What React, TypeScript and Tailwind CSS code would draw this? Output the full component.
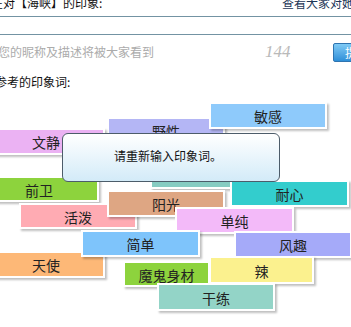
import React from "react";

type Tag = { t: string; x: number; y: number; w: number; h: number; c: string };

const tags: Tag[] = [
  { t: "野性", x: 109, y: 24, w: 114, h: 23, c: "#b4b6f5" },
  { t: "敏感", x: 211, y: 9, w: 114, h: 23, c: "#8ecafb" },
  { t: "文静", x: -11, y: 35, w: 114, h: 23, c: "#ebb2f3" },
  { t: "", x: 152, y: 69, w: 114, h: 23, c: "#86ccc2" },
  { t: "前卫", x: -19, y: 83, w: 116, h: 22, c: "#8dd33d" },
  { t: "耐心", x: 232, y: 87, w: 115, h: 23, c: "#33cdcd" },
  { t: "活泼", x: 21, y: 110, w: 114, h: 22, c: "#ffabb3" },
  { t: "阳光", x: 109, y: 97, w: 114, h: 23, c: "#dea683" },
  { t: "单纯", x: 177, y: 114, w: 115, h: 23, c: "#f3baf9" },
  { t: "天使", x: -11, y: 158, w: 114, h: 23, c: "#fdb877" },
  { t: "简单", x: 83, y: 137, w: 115, h: 23, c: "#7ec4fb" },
  { t: "风趣", x: 236, y: 138, w: 114, h: 23, c: "#a5aaf9" },
  { t: "魔鬼身材", x: 125, y: 168, w: 83, h: 22, c: "#8dd33d" },
  { t: "辣", x: 211, y: 163, w: 101, h: 24, c: "#fbf18e" },
  { t: "干练", x: 159, y: 190, w: 114, h: 24, c: "#93d4c7" },
];

export default function App() {
  return (
    <div
      className="relative w-[351px] h-[327px] overflow-hidden bg-white flex flex-col text-[12px] text-[#111]"
      style={{ fontFamily: '"Noto Sans CJK SC", "Noto Sans", sans-serif' }}
    >
      <div className="h-[16px] shrink-0 flex items-start whitespace-nowrap">
        <span className="-ml-[9px] -mt-[3px] leading-[12px] w-[291px] shrink-0">在对【海峡】的印象:</span>
        <span className="-mt-[3px] leading-[12px] text-[#1d3657]">查看大家对她的印象</span>
      </div>
      <div className="h-[19px] shrink-0 border-y border-[#7393a3]" />
      <div className="h-[34px] shrink-0 flex items-center whitespace-nowrap">
        <span className="-ml-[2px] w-[267px] shrink-0 text-[#ababab] leading-[12px]">您的昵称及描述将被大家看到</span>
        <span
          className="w-[68px] shrink-0 italic text-[17px] text-[#b9b9b9] leading-[14px]"
          style={{ fontFamily: '"Liberation Serif", serif' }}
        >
          144
        </span>
        <div className="h-[19px] w-[40px] shrink-0 rounded-[2px] border border-[#2f74b0] bg-gradient-to-b from-[#7fcaf5] to-[#2d8fd8] pl-[11px] text-white text-[12px] leading-[17px]">
          提交
        </div>
      </div>
      <div className="h-[26px] shrink-0 flex items-center whitespace-nowrap">
        <span className="-ml-[17px] leading-[12px]">可参考的印象词:</span>
      </div>
      <div className="relative flex-1">
        {tags.map((g, i) => (
          <div
            key={i}
            className="absolute flex items-center justify-center text-[14px] leading-[14px] text-[#222] shadow-[0_0_0_2px_#ffffff,2px_2px_2px_2px_rgba(0,0,0,0.25)]"
            style={{ left: g.x, top: g.y, width: g.w, height: g.h, background: g.c }}
          >
            <span className="pt-[1px]">{g.t}</span>
          </div>
        ))}
        <div className="absolute left-[62px] top-[38px] w-[218px] h-[49px] rounded-[6px] border border-[#4c5c6a] bg-gradient-to-b from-[#ffffff] to-[#d3ebf8] flex items-center justify-center pb-[3px] pr-[6px]">
          <span className="text-[12px] leading-[12px] text-[#111]">请重新输入印象词。</span>
        </div>
      </div>
    </div>
  );
}
